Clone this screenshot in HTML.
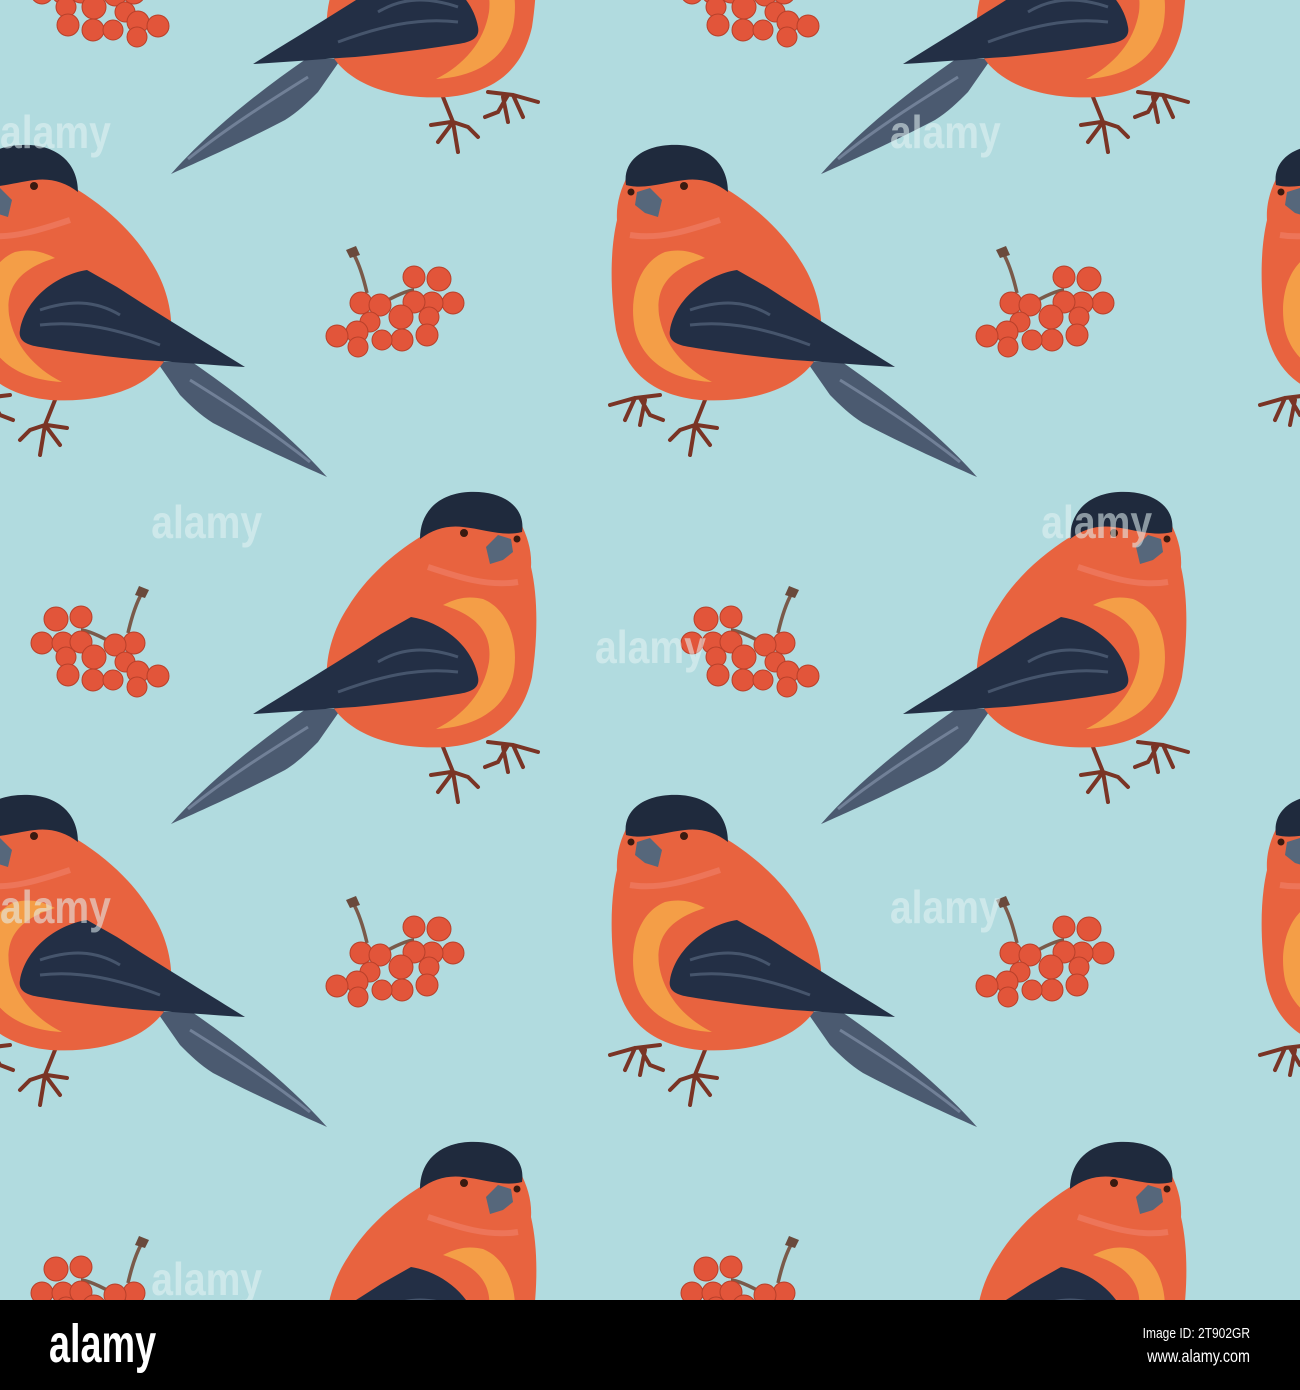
<!DOCTYPE html>
<html><head><meta charset="utf-8"><style>
html,body{margin:0;padding:0;width:1300px;height:1390px;overflow:hidden;background:#000}
svg{display:block;position:absolute;left:0;top:0}
</style></head><body>
<svg width="1300" height="1390" viewBox="0 0 1300 1390" xmlns="http://www.w3.org/2000/svg">
<defs>
<g id="bird">
  <path d="M807,362 L842,362 C890,395 940,435 977,477 C950,465 905,445 863,423 C850,415 840,405 830,395 Z" fill="#4b5a70"/>
  <path d="M840,380 C880,405 920,430 960,462" stroke="#8a9ab0" stroke-width="3" fill="none" opacity="0.6"/>
  <g stroke="#7a3425" stroke-width="4" fill="none" stroke-linecap="round">
    <path d="M660,395 L635,398 L610,405 M635,398 L625,420 M640,398 L650,415 L663,420 M645,400 L640,425"/>
    <path d="M705,400 L695,425 L680,430 L670,440 M695,425 L690,455 M695,425 L710,445 M697,425 L717,428"/>
  </g>
  <path d="M628,175 C620,190 616,205 617,220 C610,250 610,290 616,330 C625,370 650,395 700,400 C750,403 795,390 815,360 C828,330 820,290 800,260 C785,235 760,210 728,190 C700,165 650,160 628,175 Z" fill="#e8633f"/>
  <path d="M665,252 C640,262 628,295 635,330 C643,362 672,380 712,382 C684,368 664,345 659,315 C656,290 666,270 705,258 C690,250 678,249 665,252 Z" fill="#f5a448" opacity="0.9"/>
  <path d="M630,235 C660,240 690,230 720,220" stroke="#f0826a" stroke-width="6" fill="none" opacity="0.6"/>
  <path d="M626,185 C622,160 645,143 680,145 C710,147 728,165 728,192 C715,182 700,178 685,180 C665,182 645,190 626,185 Z" fill="#1f2a3d"/>
  <circle cx="631" cy="192" r="3.5" fill="#3a1a10"/>
  <circle cx="684" cy="186" r="4" fill="#3a1a10"/>
  <path d="M637,192 L650,188 L662,200 L658,217 L645,213 L635,205 Z" fill="#56677b"/>
  <path d="M670,330 C675,300 705,275 737,270 L767,287 C810,315 860,345 895,367 C860,365 825,362 793,360 C760,357 720,352 690,347 C675,345 668,340 670,330 Z" fill="#232f45"/>
  <path d="M690,310 C720,300 745,300 770,315 M690,325 C730,320 770,330 810,345" stroke="#55657e" stroke-width="3" fill="none" opacity="0.7"/>
</g>
<g id="berries">
  <path d="M353,253 C360,265 364,280 367,293 M380,305 C395,295 410,290 414,290" stroke="#7a5a4a" stroke-width="3.5" fill="none"/>
  <path d="M346,250 L356,246 L360,255 L350,258 Z" fill="#6a4a3c"/>
  <g fill="#e2553a" stroke="#b8402a" stroke-width="1">
    <circle cx="414" cy="277" r="11"/><circle cx="439" cy="279" r="12"/>
    <circle cx="453" cy="303" r="11"/><circle cx="432" cy="303" r="11"/>
    <circle cx="414" cy="302" r="11"/><circle cx="361" cy="303" r="11"/>
    <circle cx="380" cy="305" r="11"/><circle cx="370" cy="322" r="10"/>
    <circle cx="429" cy="317" r="10"/><circle cx="401" cy="317" r="12"/>
    <circle cx="427" cy="335" r="11"/><circle cx="402" cy="340" r="11"/>
    <circle cx="382" cy="340" r="10"/><circle cx="357" cy="332" r="11"/>
    <circle cx="337" cy="336" r="11"/><circle cx="358" cy="347" r="10"/>
  </g>
</g>
</defs>
<rect x="0" y="0" width="1300" height="1300" fill="#b1dbdf"/>
<use href="#berries"/>
<use href="#berries" transform="translate(650,0)"/>
<use href="#berries" transform="translate(0,650)"/>
<use href="#berries" transform="translate(650,650)"/>
<use href="#berries" transform="translate(495,-310) scale(-1,1)"/>
<use href="#berries" transform="translate(1145,-310) scale(-1,1)"/>
<use href="#berries" transform="translate(495,340) scale(-1,1)"/>
<use href="#berries" transform="translate(1145,340) scale(-1,1)"/>
<use href="#berries" transform="translate(495,990) scale(-1,1)"/>
<use href="#berries" transform="translate(1145,990) scale(-1,1)"/>
<use href="#bird"/>
<use href="#bird" transform="translate(-650,0)"/>
<use href="#bird" transform="translate(650,0)"/>
<use href="#bird" transform="translate(0,650)"/>
<use href="#bird" transform="translate(-650,650)"/>
<use href="#bird" transform="translate(650,650)"/>
<use href="#bird" transform="translate(1148,-303) scale(-1,1)"/>
<use href="#bird" transform="translate(1798,-303) scale(-1,1)"/>
<use href="#bird" transform="translate(1148,347) scale(-1,1)"/>
<use href="#bird" transform="translate(1798,347) scale(-1,1)"/>
<use href="#bird" transform="translate(1148,997) scale(-1,1)"/>
<use href="#bird" transform="translate(1798,997) scale(-1,1)"/>
<g font-family="Liberation Sans, sans-serif" font-weight="bold" fill="#e4f3f4" opacity="0.55" font-size="46" transform="scale(0.85,1)">
  <text x="0" y="148">alamy</text>
  <text x="1047" y="148">alamy</text>
  <text x="178" y="538">alamy</text>
  <text x="700" y="663">alamy</text>
  <text x="1047" y="923">alamy</text>
  <text x="0" y="923">alamy</text>
  <text x="178" y="1295">alamy</text>
  <text x="1225" y="538">alamy</text>
</g>
<rect x="0" y="1300" width="1300" height="90" fill="#000"/>
<text x="0" y="0" font-family="Liberation Sans, sans-serif" font-weight="bold" font-size="54" fill="#fff" transform="translate(49,1362) scale(0.7,1)">alamy</text>
<text x="0" y="0" text-anchor="end" font-family="Liberation Sans, sans-serif" font-size="15" fill="#fff" transform="translate(1250,1338) scale(0.8,1)">Image ID: 2T902GR</text>
<text x="0" y="0" text-anchor="end" font-family="Liberation Sans, sans-serif" font-size="18" fill="#fff" transform="translate(1250,1362) scale(0.8,1)">www.alamy.com</text>
</svg>
</body></html>
